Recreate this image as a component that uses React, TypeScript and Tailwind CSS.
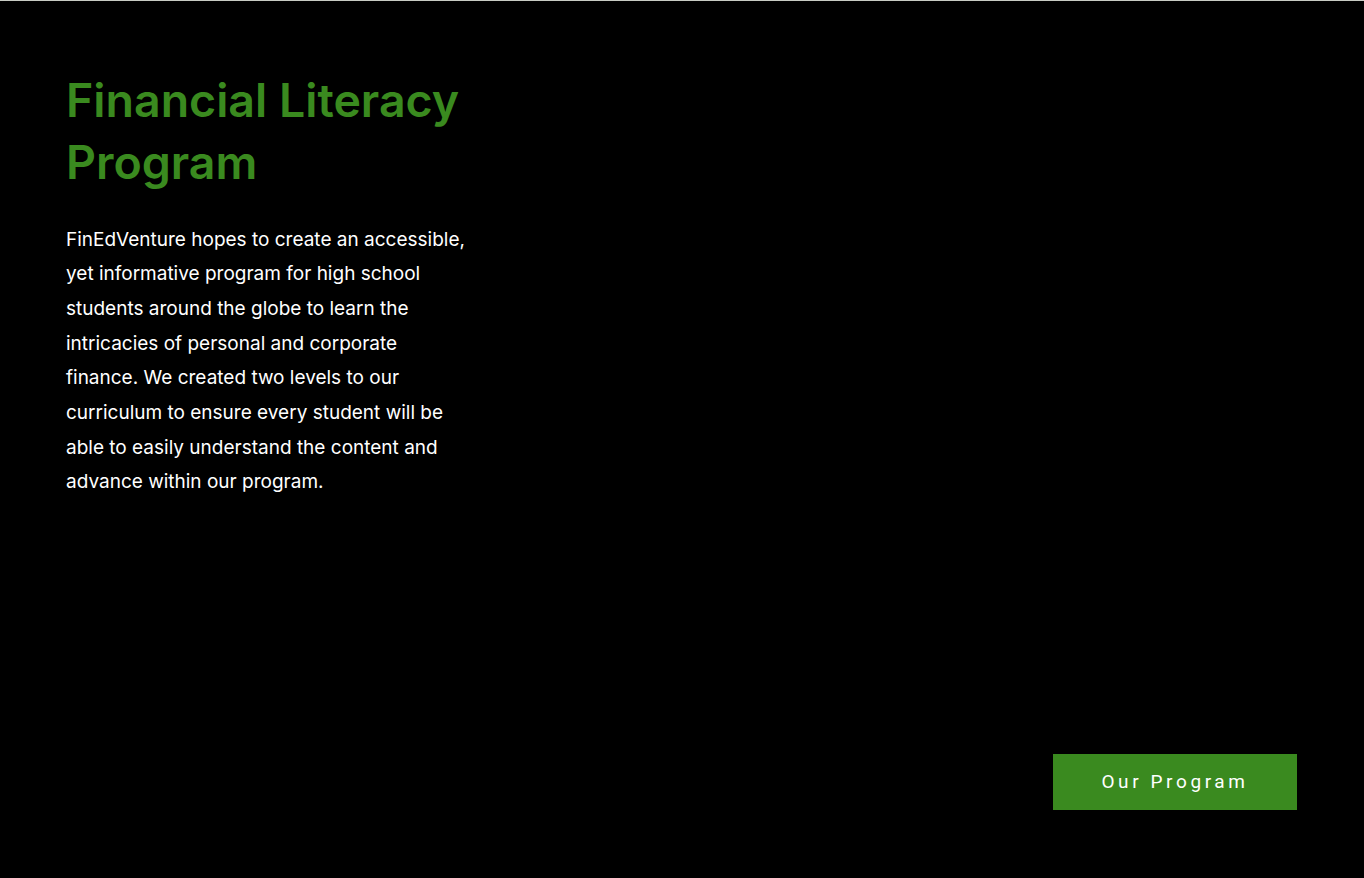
export default function App() {
  return (
    <div className="w-full h-[878px] bg-black border-t border-[#c8cbc4] flex flex-col justify-between px-[66px] pt-[68px] pb-[68px]" style={{ fontFamily: "Inter, 'Noto Sans', sans-serif" }}>
      <div className="w-[405px]">
        <h1 className="text-[46.5px] leading-[62px] font-semibold text-[#3a8a1f] whitespace-nowrap">Financial Literacy<br />Program</h1>
        <p className="mt-[29.5px] text-[19px] leading-[34.7px] text-white">
          FinEdVenture hopes to create an accessible, yet informative program for high school students around the globe to learn the intricacies of personal and corporate finance. We created two levels to our curriculum to ensure every student will be able to easily understand the content and advance within our program.
        </p>
      </div>
      <div className="flex justify-end">
        <button className="w-[244px] h-[56px] bg-[#3a8a1f] text-white text-[19px] tracking-[3.6px] mr-[1px]" style={{ fontFamily: "Roboto, sans-serif" }}>Our Program</button>
      </div>
    </div>
  );
}
